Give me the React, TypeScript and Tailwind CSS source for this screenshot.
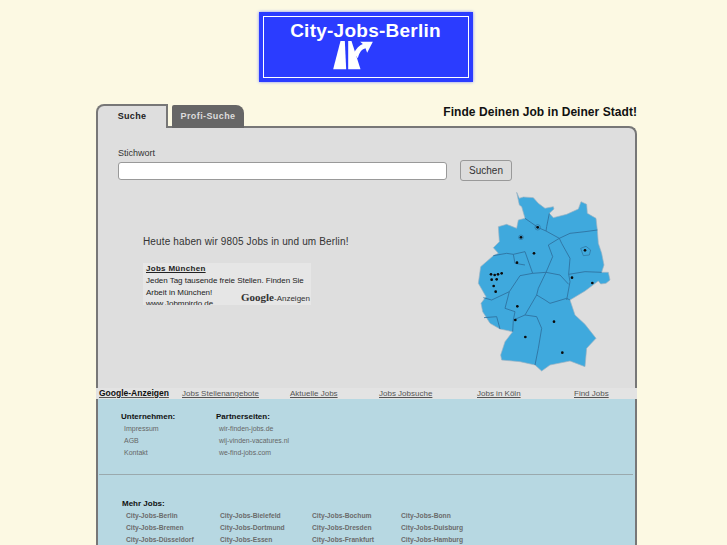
import React from 'react';

const navLinks = [
  { label: 'Jobs Stellenangebote', w: 'w-[108px]' },
  { label: 'Aktuelle Jobs', w: 'w-[89px]' },
  { label: 'Jobs Jobsuche', w: 'w-[98px]' },
  { label: 'Jobs in Köln', w: 'w-[97px]' },
  { label: 'Find Jobs', w: 'w-[40px]' },
];

const companyLinks = ['Impressum', 'AGB', 'Kontakt'];
const partnerLinks = ['wir-finden-jobs.de', 'wij-vinden-vacatures.nl', 'we-find-jobs.com'];
const cityRows = [
  ['Berlin', 'Bielefeld', 'Bochum', 'Bonn'],
  ['Bremen', 'Dortmund', 'Dresden', 'Duisburg'],
  ['Düsseldorf', 'Essen', 'Frankfurt', 'Hamburg'],
];
const cityCols = ['w-[94px]', 'w-[92px]', 'w-[89px]', 'w-[70px]'];

const cityDots = [
  [203, 127], [153, 157], [192, 205], [141, 233], [345, 196], [306, 278], [367, 294],
  [63, 268], [74, 270], [84, 268], [95, 265], [65, 284], [80, 283], [71, 303], [77, 320],
  [142, 364], [136, 405], [252, 410], [166, 456], [277, 503],
];

const GermanyMap = () => (
  <svg viewBox="0 0 525 585" className="w-[175px] h-[195px]">
    <path
      d="M140 22 L148 40 L160 36 L190 38 L205 55 L225 70 L250 65 L252 72 L238 85 L250 98 L290 88 L325 72 L333 50 L350 58 L352 85 L378 100 L382 135 L385 175 L395 205 L402 240 L395 262 L415 262 L420 285 L408 295 L392 297 L385 288 L345 318 L300 345 L315 390 L345 418 L378 460 L350 490 L345 545 L300 528 L240 540 L215 558 L195 540 L150 530 L95 525 L92 510 L105 470 L128 440 L90 432 L60 415 L38 380 L33 355 L48 335 L25 295 L32 245 L70 212 L85 205 L70 188 L88 170 L85 125 L110 118 L140 130 L145 105 L165 100 L155 65 L148 60 Z"
      fill="#3fa9dd"
      stroke="#9fb4c2"
      strokeWidth="2"
    />
    <path
      d="M165 100 L205 128 L228 138 L268 160 L300 145 L345 140 L382 135 M238 85 L230 125 L228 138 M268 160 L235 180 L248 215 L228 262 M268 160 L275 175 L300 220 L296 268 L345 260 L395 262 M296 268 L300 290 L290 345 M228 262 L205 310 L200 330 L225 345 L240 355 L290 340 L300 345 M228 262 L270 270 L296 298 M188 265 L150 272 L118 320 L105 370 L135 380 L130 405 L165 390 L200 395 L215 430 L205 490 L195 540 M200 330 L165 390 M188 265 L228 262 M70 212 L110 205 L130 208 L165 200 L188 265 M130 208 L135 235 L165 240 M40 338 L65 345 L118 320 M42 398 L80 395 L90 432 M128 440 L130 405"
      fill="none"
      stroke="#2e6f9c"
      strokeWidth="2.5"
    />
    <circle cx="203" cy="127" r="8" fill="none" stroke="#2e6f9c" strokeWidth="2" />
    <circle cx="153" cy="157" r="7" fill="none" stroke="#2e6f9c" strokeWidth="2" />
    <path d="M332 190 L348 184 L362 195 L358 210 L340 212 Z" fill="none" stroke="#2e6f9c" strokeWidth="2" />
    {cityDots.map(([cx, cy]) => (
      <circle key={`${cx}-${cy}`} cx={cx} cy={cy} r="4" fill="#0b0b0b" />
    ))}
  </svg>
);

const MotorwaySign = () => (
  <svg viewBox="280 120 125 90" className="w-[42px] h-[30px]">
    <path d="M305 123 L318 123 L322 208 L283 208 Z" fill="#fff" />
    <path d="M328 123 L338 123 L365 208 L328 208 Z" fill="#fff" />
    <path
      d="M345 160 C352 145 362 135 372 132 L364 125 L402 125 L385 158 L380 145 C370 148 362 155 357 175 Z"
      fill="#fff"
    />
  </svg>
);

const App = () => (
  <div className="h-[545px] overflow-hidden bg-[#fcf9e3] font-['Liberation_Sans',Arial,sans-serif]">
    {/* logo */}
    <div className="pt-[12px] pl-[4px] flex justify-center">
      <div className="w-[214px] h-[70px] bg-[#2b3cff] p-[4px] shadow-[0_0_3px_#7f8bff]">
        <div className="h-full border-[1.5px] border-white flex flex-col items-center">
          <div className="mt-[3px] text-white font-bold text-[19px] leading-[21px] tracking-[0.25px]">City-Jobs-Berlin</div>
          <div className="mt-[-1px] mr-[25px]">
            <MotorwaySign />
          </div>
        </div>
      </div>
    </div>

    <div className="w-[541px] ml-[96px] mt-[22px]">
      {/* tabs */}
      <div className="relative z-10 flex items-end h-[24px]">
        <div className="w-[72px] h-[24px] bg-[#dedede] border-t-2 border-l-2 border-r-2 border-[#777] rounded-tl-[8px] text-center text-[9px] font-bold text-[#222] leading-[21px] tracking-[0.3px]">
          Suche
        </div>
        <div className="ml-[4px] w-[72px] h-[23px] bg-[#666] rounded-tr-[8px] rounded-tl-[2px] text-center text-[9px] font-bold text-[#ddd] leading-[22px] tracking-[0.4px]">
          Profi-Suche
        </div>
        <div className="flex-1 self-start text-right text-[12px] font-bold text-[#111] leading-[17px] tracking-[0.05px]">
          Finde Deinen Job in Deiner Stadt!
        </div>
      </div>

      {/* main panel */}
      <div className="-mt-[2px] h-[262px] bg-[#dedede] border-t-2 border-l-2 border-r-2 border-[#777] rounded-tr-[8px]">
        <div className="pt-[19px] pl-[20px]">
          <div className="text-[9px] leading-[12px] text-[#333]">Stichwort</div>
          <div className="flex items-center mt-[2px]">
            <div className="w-[329px] h-[18px] bg-white border border-[#999] rounded-[3px]" />
            <button className="ml-[13px] -mt-[1px] w-[52px] h-[21px] bg-[#dcdcdc] border border-[#999] rounded-[3px] text-[10px] text-[#333]">
              Suchen
            </button>
          </div>
        </div>

        <div className="flex">
          <div className="pl-[45px] w-[377px] shrink-0">
            <div className="mt-[53px] text-[10px] leading-[16px] text-[#333] tracking-[0.14px]">
              Heute haben wir 9805 Jobs in und um Berlin!
            </div>
            <div className="relative mt-[13px] w-[168px] h-[42px] bg-[#e6e6e6] overflow-hidden pl-[3px] pt-[1px]">
              <div className="text-[8px] font-bold text-[#222] underline leading-[10px] tracking-[0.3px]">Jobs München</div>
              <div className="mt-[1px] text-[8px] leading-[11.5px] text-[#222] tracking-[-0.03px]">
                <div>Jeden Tag tausende freie Stellen. Finden Sie</div>
                <div>Arbeit in München!</div>
                <div>www.Jobmpirdo.de</div>
              </div>
              <div className="absolute right-[1px] bottom-0 flex items-baseline bg-[#e6e6e6] pl-[1px]">
                <span className="font-['Liberation_Serif',serif] text-[11px] font-bold leading-[14px] text-[#333]">Google</span>
                <span className="text-[8px] text-[#333]">-Anzeigen</span>
              </div>
            </div>
          </div>
          <div className="-ml-[5px] mt-[4px] shrink-0">
            <GermanyMap />
          </div>
        </div>
      </div>

      {/* link bar */}
      <div className="flex items-center h-[11px] bg-[#e3e3e3] text-[8px] leading-[11px] text-[#555] underline">
        <div className="pl-[3px] w-[86px] text-[8.5px] font-bold text-[#111]">Google-Anzeigen</div>
        {navLinks.map((link) => (
          <div key={link.label} className={`${link.w} whitespace-nowrap`}>{link.label}</div>
        ))}
      </div>

      {/* footer */}
      <div className="h-[200px] bg-[#b7d8e2] border-l-2 border-r-2 border-[#777]">
        <div className="flex pt-[13px] pl-[23px]">
          <div className="w-[95px]">
            <div className="text-[8px] font-bold text-[#111] leading-[10px]">Unternehmen:</div>
            <div className="pl-[3px] mt-[1px] text-[7px] text-[#666]">
              {companyLinks.map((item) => (
                <div key={item} className="h-[12px] leading-[12px]">{item}</div>
              ))}
            </div>
          </div>
          <div>
            <div className="text-[8px] font-bold text-[#111] leading-[10px]">Partnerseiten:</div>
            <div className="pl-[3px] mt-[1px] text-[6.9px] text-[#666]">
              {partnerLinks.map((item) => (
                <div key={item} className="h-[12px] leading-[12px]">{item}</div>
              ))}
            </div>
          </div>
        </div>

        <div className="mt-[15px] ml-[1px] mr-[2px] border-t border-[#9aa9ad]" />

        <div className="pt-[24px] pl-[24px]">
          <div className="text-[8px] font-bold text-[#111] leading-[10px]">Mehr Jobs:</div>
          <div className="pl-[4px] mt-[1px] text-[6.7px] font-bold text-[#6b6b6b]">
            {cityRows.map((row) => (
              <div key={row[0]} className="flex h-[12px] leading-[12px]">
                {row.map((city, i) => (
                  <div key={city} className={cityCols[i]}>City-Jobs-{city}</div>
                ))}
              </div>
            ))}
          </div>
        </div>
      </div>
    </div>
  </div>
);

export default App;
